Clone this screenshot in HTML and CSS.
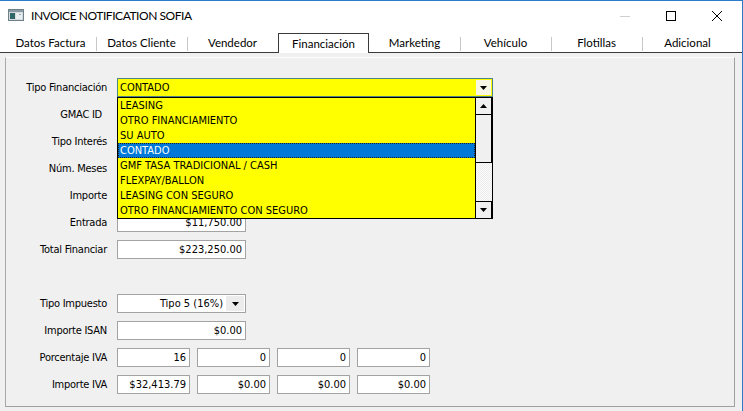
FILE: index.html
```html
<!DOCTYPE html>
<html lang="es">
<head>
<meta charset="utf-8">
<title>INVOICE NOTIFICATION SOFIA</title>
<link rel="stylesheet" href="styles.css">
</head>
<body>
<div class="window">
  <div class="titlebar">
    <svg class="appicon" width="16" height="12" viewBox="0 0 16 12">
      <rect x="0.5" y="0.5" width="15" height="11" fill="#d4dadd" stroke="#6f8088"/>
      <rect x="1" y="1" width="14" height="2" fill="#8a9aa2"/>
      <rect x="2" y="4" width="5" height="6" fill="#2f6666"/>
      <rect x="8" y="4" width="6" height="6" fill="#e9eef0"/>
      <rect x="11" y="5" width="2" height="1" fill="#9aa8ae"/>
    </svg>
    <span class="title">INVOICE NOTIFICATION SOFIA</span>
    <div class="controls">
      <div class="ctl"><svg width="10" height="10" viewBox="0 0 10 10"><line x1="0" y1="5.5" x2="10" y2="5.5" stroke="#cfcfcf"/></svg></div>
      <div class="ctl"><svg width="10" height="10" viewBox="0 0 10 10"><rect x="0.5" y="0.5" width="9" height="9" fill="none" stroke="#000"/></svg></div>
      <div class="ctl"><svg width="10" height="10" viewBox="0 0 10 10"><path d="M0 0 L10 10 M10 0 L0 10" stroke="#000" stroke-width="1"/></svg></div>
    </div>
  </div>

  <div class="tabstrip">
    <div class="tab sep">Datos Factura</div>
    <div class="tab sep">Datos Cliente</div>
    <div class="tab">Vendedor</div>
    <div class="tab active">Financiación</div>
    <div class="tab sep">Marketing</div>
    <div class="tab sep">Vehículo</div>
    <div class="tab sep">Flotillas</div>
    <div class="tab">Adicional</div>
  </div>

  <div class="page">
    <div class="panel">
      <div class="form">
        <div class="row">
          <div class="lbl">Tipo Financiación</div>
          <div class="combo combo-main">
            <span class="combo-text">CONTADO</span>
            <span class="combo-btn"><svg width="7" height="4" viewBox="0 0 7 4"><path d="M0 0 H7 L3.5 4 Z" fill="#000"/></svg></span>
            <div class="droplist">
              <div class="items">
                <div class="item">LEASING</div>
                <div class="item">OTRO FINANCIAMIENTO</div>
                <div class="item">SU AUTO</div>
                <div class="item selected">CONTADO</div>
                <div class="item">GMF TASA TRADICIONAL / CASH</div>
                <div class="item">FLEXPAY/BALLON</div>
                <div class="item">LEASING CON SEGURO</div>
                <div class="item">OTRO FINANCIAMIENTO CON SEGURO</div>
              </div>
              <div class="scrollbar">
                <div class="sb-btn"><svg width="7" height="4" viewBox="0 0 7 4"><path d="M0 4 H7 L3.5 0 Z" fill="#000"/></svg></div>
                <div class="sb-thumb"></div>
                <div class="sb-track"></div>
                <div class="sb-btn"><svg width="7" height="4" viewBox="0 0 7 4"><path d="M0 0 H7 L3.5 4 Z" fill="#000"/></svg></div>
              </div>
            </div>
          </div>
        </div>
        <div class="row"><div class="lbl lbl-gmac">GMAC ID</div></div>
        <div class="row"><div class="lbl">Tipo Interés</div></div>
        <div class="row"><div class="lbl">Núm. Meses</div></div>
        <div class="row"><div class="lbl">Importe</div></div>
        <div class="row"><div class="lbl">Entrada</div><div class="box">$11,750.00</div></div>
        <div class="row"><div class="lbl">Total Financiar</div><div class="box">$223,250.00</div></div>
        <div class="row"></div>
        <div class="row">
          <div class="lbl">Tipo Impuesto</div>
          <div class="combo combo-tax">
            <span class="combo-text">Tipo 5 (16%)</span>
            <span class="combo-btn"><svg width="7" height="4" viewBox="0 0 7 4"><path d="M0 0 H7 L3.5 4 Z" fill="#000"/></svg></span>
          </div>
        </div>
        <div class="row"><div class="lbl">Importe ISAN</div><div class="box">$0.00</div></div>
        <div class="row">
          <div class="lbl">Porcentaje IVA</div>
          <div class="boxes">
            <div class="box small">16</div><div class="box small">0</div><div class="box small">0</div><div class="box small">0</div>
          </div>
        </div>
        <div class="row">
          <div class="lbl">Importe IVA</div>
          <div class="boxes">
            <div class="box small">$32,413.79</div><div class="box small">$0.00</div><div class="box small">$0.00</div><div class="box small">$0.00</div>
          </div>
        </div>
      </div>
    </div>
  </div>
</div>
</body>
</html>
```

FILE: styles.css
```css
* { box-sizing: border-box; }

html, body {
  margin: 0;
  padding: 0;
  background: #f0f0f0;
}

body {
  width: 743px;
  height: 411px;
  overflow: hidden;
}

.window {
  width: 743px;
  height: 411px;
  display: flex;
  flex-direction: column;
  border-top: 1px solid #2b7bcb;
  border-right: 1px solid #2b7bcb;
  background: #f0f0f0;
}

/* ---------- title bar ---------- */
.titlebar {
  height: 29px;
  flex: none;
  background: #fff;
  display: flex;
  align-items: center;
  padding-left: 8px;
  font-family: Lato, "Noto Sans", sans-serif;
  font-size: 12px;
  letter-spacing: -0.45px;
  color: #000;
}

.appicon { flex: none; margin-top: -1px; }

.title { margin-left: 7px; }

.controls {
  margin-left: auto;
  margin-right: 2px;
  display: flex;
  height: 100%;
}

.ctl {
  width: 46px;
  display: flex;
  align-items: center;
  justify-content: center;
}

/* ---------- tabs ---------- */
.tabstrip {
  height: 23px;
  flex: none;
  background: #fff;
  display: flex;
  align-items: flex-end;
  padding-left: 5px;
  border-bottom: 1px solid #3a3a3a;
  font-family: Lato, "Noto Sans", sans-serif;
  font-size: 11.5px;
  color: #000;
}

.tab {
  width: 91px;
  height: 19px;
  padding-top: 3px;
  text-align: center;
  position: relative;
  white-space: nowrap;
}

.tab.sep::after {
  content: "";
  position: absolute;
  right: -1px;
  top: 4px;
  width: 1px;
  height: 14px;
  background: #c8c8c8;
}

.tab.active {
  height: 20px;
  margin-bottom: -1px;
  border: 1px solid #3a3a3a;
  border-bottom: none;
  background: #fff;
  z-index: 1;
  padding-top: 3px;
}

/* ---------- page ---------- */
.page {
  flex: 1;
  padding: 4px 7px 4px 5px;
}

.panel {
  height: 100%;
  border: 1px solid #a0a0a0;
  border-top-color: #fcfcfc;
  border-left-color: #a8a8a8;
  padding-top: 20px;
}

.form {
  display: flex;
  flex-direction: column;
  gap: 8px;
  font-family: "DejaVu Sans Condensed", "DejaVu Sans", sans-serif;
  font-size: 11px;
  color: #000;
}

.row {
  height: 19px;
  display: flex;
  align-items: center;
}

.lbl {
  width: 101px;
  margin-right: 10px;
  text-align: right;
  white-space: nowrap;
  flex: none;
  letter-spacing: -0.25px;
}

.lbl-gmac { padding-right: 5px; }

/* ---------- inputs ---------- */
.box {
  width: 129px;
  height: 19px;
  background: #fff;
  border: 1px solid #a3a3a3;
  text-align: right;
  padding: 0 3px;
  line-height: 17px;
  white-space: nowrap;
}

.boxes {
  display: flex;
  gap: 7px;
}

.box.small { width: 73px; }

.combo {
  height: 19px;
  display: flex;
  align-items: stretch;
  position: relative;
  white-space: nowrap;
}

.combo-main {
  width: 376px;
  background: #ffff00;
  border: 1px solid #4f8585;
}

.combo-main .combo-text {
  flex: 1;
  padding-left: 2px;
  line-height: 17px;
}

.combo-btn {
  width: 15px;
  display: flex;
  align-items: center;
  justify-content: center;
}

.combo-main .combo-btn {
  background: #f7f7e4;
  margin: 1px 1px 1px 0;
}

.combo-tax {
  width: 129px;
  background: #fff;
  border: 1px solid #a3a3a3;
}

.combo-tax .combo-text {
  flex: 1;
  text-align: right;
  padding-right: 3px;
  line-height: 17px;
}

.combo-tax .combo-btn {
  width: 18px;
  background: #ececec;
  margin: 1px 1px 1px 0;
}

/* ---------- drop-down list (overlay) ---------- */
.droplist {
  position: absolute;
  top: 18px;
  left: -1px;
  width: 376px;
  height: 122px;
  border: 1px solid #000;
  background: #ffff00;
  display: flex;
  z-index: 5;
}

.items {
  flex: 1;
}

.item {
  height: 15px;
  line-height: 15px;
  padding-left: 2px;
}

.item.selected {
  background: #0078d7;
  color: #fff;
  outline: 1px dotted #222;
  outline-offset: -1px;
}

.scrollbar {
  width: 17px;
  display: flex;
  flex-direction: column;
  border-left: 1px solid #000;
}

.sb-btn {
  height: 17px;
  flex: none;
  background: #f0f0f0;
  border: 1px solid #000;
  border-left: none;
  display: flex;
  align-items: center;
  justify-content: center;
}

.sb-btn:first-child { border-top: none; }
.sb-btn:last-child { border-bottom: none; }

.sb-thumb {
  height: 48px;
  flex: none;
  background: #f0f0f0;
  border-right: 1px solid #000;
  border-bottom: 1px solid #000;
}

.sb-track {
  flex: 1;
  background-color: #fcfcfc;
  background-image: repeating-conic-gradient(#ebebeb 0 25%, #fcfcfc 0 50%);
  background-size: 2px 2px;
}
```
